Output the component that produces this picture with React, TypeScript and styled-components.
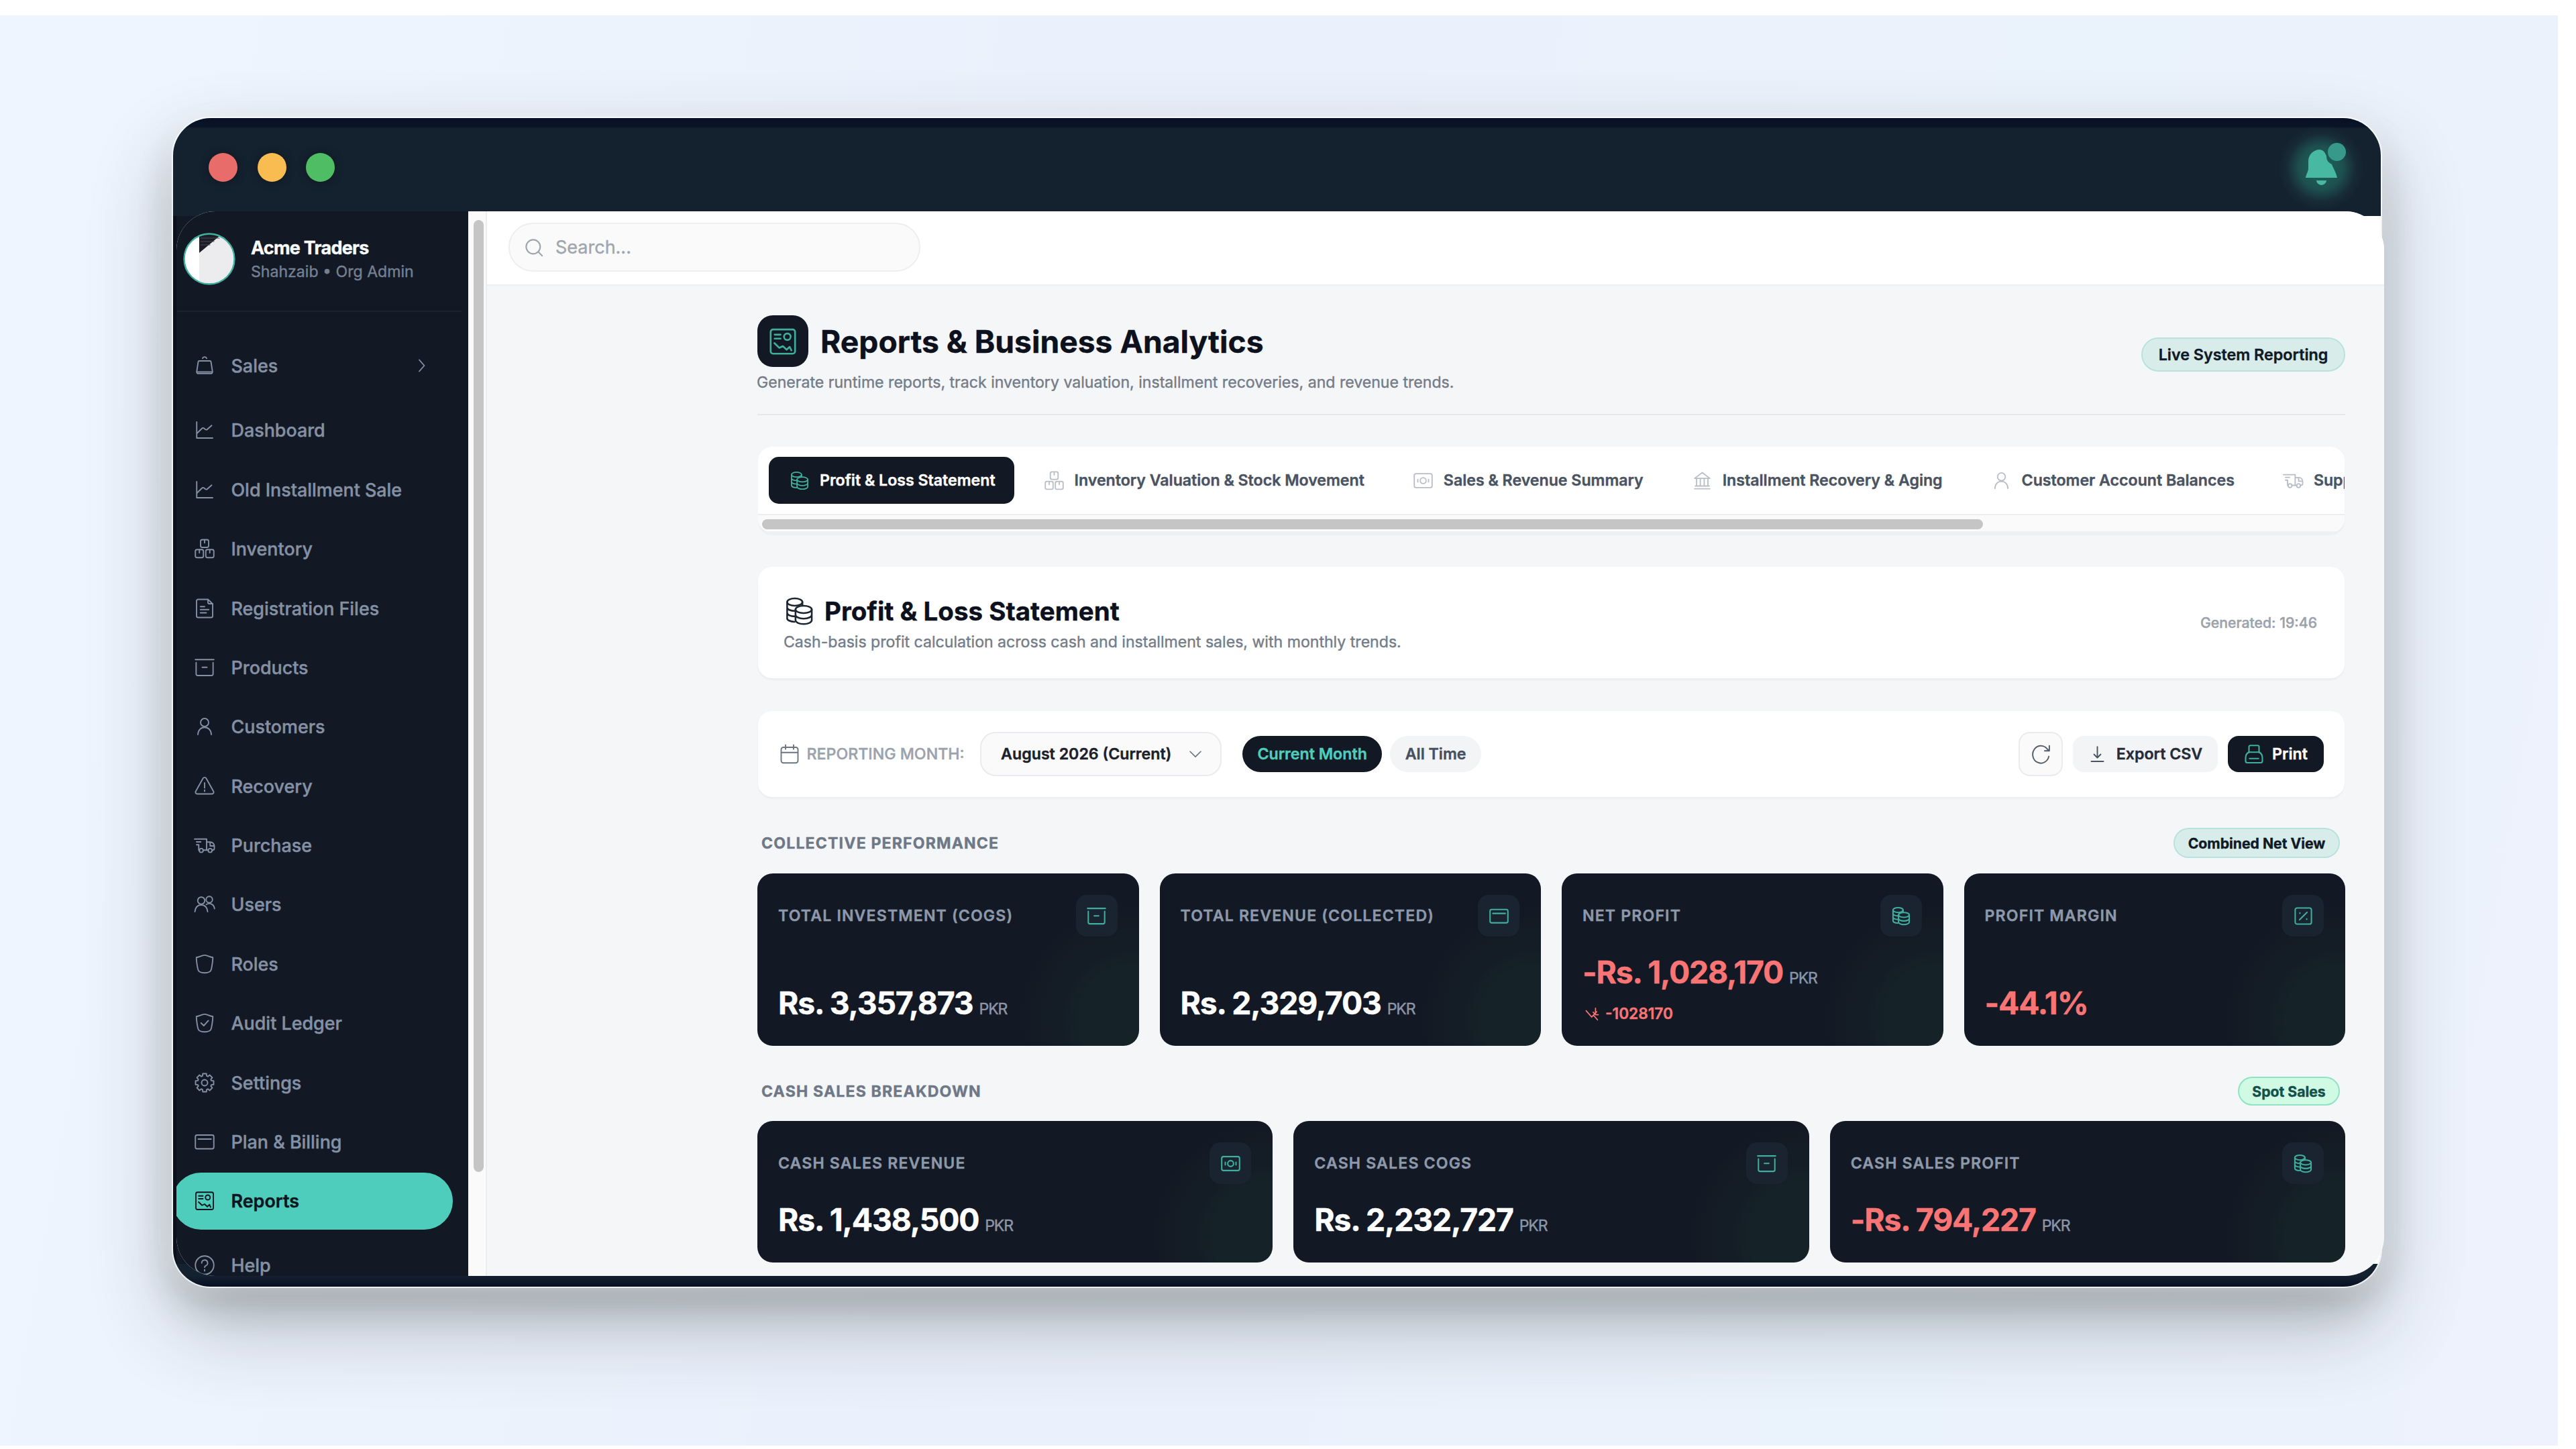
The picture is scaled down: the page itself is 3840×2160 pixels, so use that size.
import React from 'react'
import styled, { createGlobalStyle, css } from 'styled-components'

const NAVY = '#131924'
const TEAL = '#4ecdbc'
const ICON_TEAL = '#3fae9c'
const RED = '#f97575'

const GlobalStyle = createGlobalStyle`
  * {
    box-sizing: border-box;
  }

  body {
    margin: 0;
    background: #fff;
    font-family: Inter, 'Liberation Sans', sans-serif;
    -webkit-text-stroke: 0.4px;
    overflow: hidden;
  }
`

/* ---------- icons ---------- */

const gearPath = () => {
  const pts: string[] = []
  for (let i = 0; i < 8; i++) {
    const a = (i * Math.PI) / 4
    const at = (r: number, d: number) =>
      `${(12 + r * Math.sin(a + d)).toFixed(2)} ${(12 - r * Math.cos(a + d)).toFixed(2)}`
    pts.push(at(8.4, -0.3), at(11, -0.2), at(11, 0.2), at(8.4, 0.3))
  }
  return `M${pts.join('L')}Z`
}

const ICONS: Record<string, React.ReactNode> = {
  bag: (
    <>
      <path d='M9.6 3.4a2.5 2.3 0 0 1 4.8 0' />
      <path d='M5.6 6.4h12.8a1.2 1.2 0 0 1 1.2 1l1.8 11.8a2 2 0 0 1-2 2.3H4.6a2 2 0 0 1-2-2.3L4.4 7.4a1.2 1.2 0 0 1 1.2-1z' />
      <path d='M3 19.6h18' />
    </>
  ),
  chart: (
    <>
      <path d='M2.6 2.4v19.2h19' />
      <path d='M3 15.800l5.800-5.600c.9-.9 1.900-.9 2.800 0l1 .9c.9.800 1.900.800 2.800-.1L20.400 6.600' />
    </>
  ),
  boxes: (
    <>
      <rect x='7.2' y='1.2' width='9.6' height='9.2' rx='2' />
      <rect x='1' y='13' width='9.6' height='9.6' rx='2' />
      <rect x='13.4' y='13' width='9.6' height='9.6' rx='2' />
      <path d='M12 1.4v3.600M5.800 13.200v3.600M18.200 13.200v3.600' />
    </>
  ),
  file: (
    <>
      <path d='M16 1.2H4.2a1.8 1.8 0 0 0-1.800 1.800v18a1.800 1.800 0 0 0 1.800 1.800h15.600a1.800 1.800 0 0 0 1.800-1.800V6.600z' />
      <path d='M16 1.4v3.4a1.6 1.6 0 0 0 1.6 1.6h3.800M7 9.800h5M7 13.400h10M7 17.200h7' />
    </>
  ),
  archive: (
    <path d='M1 2.6h22M1.9 6.2v13.4a2 2 0 0 0 2 2h16.2a2 2 0 0 0 2-2V6.2M9.2 11.8h5.6' />
  ),
  user: (
    <>
      <circle cx='12' cy='7.2' r='4.8' />
      <path d='M4 21.6c.2-5.4 3.6-8.6 8-8.6s7.8 3.2 8 8.6' />
    </>
  ),
  warn: (
    <>
      <path d='M10.2 2.4a2.2 2.2 0 0 1 3.6 0l8.8 15.8a2 2 0 0 1-1.8 3H3.2a2 2 0 0 1-1.8-3z' />
      <path d='M12 8v6M12 16.6v1.4' />
    </>
  ),
  truck: (
    <>
      <path d='M0 4.6h14.4v13.2H10.4M2.4 8h5M2.4 11.4h2.6v6.4h1' />
      <path d='M14.4 8.2h4.4c2.8 0 4.8 2.2 4.8 5v2.6a2 2 0 0 1-2 2h-.6M14.4 17.8h1.8M18.6 8.4v4.4h5' />
      <circle cx='8' cy='18.2' r='2.3' />
      <circle cx='18.6' cy='18.2' r='2.3' />
    </>
  ),
  users: (
    <>
      <circle cx='8' cy='7.6' r='4.2' />
      <path d='M.4 20.8c.2-4.8 3.2-8 7.6-8s7.4 3.2 7.6 8' />
      <circle cx='17.6' cy='6.4' r='3.8' />
      <path d='M14 12.2c4.600-2.800 9.400.2 9.800 5' />
    </>
  ),
  shield: (
    <path d='M2.2 4.2C6 3.7 8.4 1.5 12 1.5s6 2.2 9.8 2.7c0 5-.8 9.3-1.8 14.1-.6 2.9-4 4.3-8 4.3s-7.4-1.4-8-4.3C3 13.5 2.2 9.2 2.2 4.2z' />
  ),
  shieldCheck: (
    <>
      <path d='M2.2 4.2C6 3.7 8.4 1.5 12 1.5s6 2.2 9.8 2.7c0 5-.8 9.3-1.8 14.1-.6 2.9-4 4.3-8 4.3s-7.4-1.4-8-4.3C3 13.5 2.2 9.2 2.2 4.2z' />
      <path d='M7.8 12l3.2 3.2 5.4-6' />
    </>
  ),
  gear: (
    <>
      <path d={gearPath()} />
      <circle cx='12' cy='12' r='3.6' />
    </>
  ),
  card: (
    <>
      <rect x='1' y='4' width='22' height='16.4' rx='2' />
      <path d='M4.4 8.8h15.4' />
    </>
  ),
  report: (
    <>
      <rect x='1.6' y='1.8' width='20.8' height='20.6' rx='2' />
      <path d='M5 6.2h5M5 9.6h5M4.8 13.4l4.2 4 3-1.4 3.2 3 2.6-2.4 1.4 3' />
      <circle cx='15.8' cy='8' r='2.8' />
    </>
  ),
  help: (
    <>
      <circle cx='12' cy='12' r='11' />
      <path d='M8.6 9.4a3.5 3.5 0 1 1 5 3.1c-1 .5-1.6 1-1.6 2.1M12 17.4v1.4' />
    </>
  ),
  coins: (
    <>
      <ellipse cx='8.6' cy='4.6' rx='6.2' ry='3' />
      <path d='M2.4 4.6v13.2c0 1.5 2.5 2.8 6 2.9M14.8 4.6v2.6M2.4 9c0 1.6 2.7 2.9 6.4 2.9M2.4 13.4c0 1.6 2.7 2.9 6.4 2.9' />
      <ellipse cx='15.8' cy='10.6' rx='6.6' ry='3' />
      <path d='M9.2 10.6v8.8c0 1.7 2.9 3.1 6.6 3.1s6.6-1.4 6.6-3.1v-8.8M9.2 15c0 1.7 2.9 3.1 6.6 3.1s6.6-1.4 6.6-3.1' />
    </>
  ),
  bill: (
    <>
      <rect x='1' y='3.4' width='22' height='17.2' rx='2.2' />
      <circle cx='12' cy='12' r='3.6' />
      <path d='M5.4 10.4v3.2M18.6 10.4v3.2' />
    </>
  ),
  bank: (
    <path d='M2.6 9.2L12 2l9.4 7.2zM5 9.4v9M9.6 9.4v9M14.4 9.4v9M19 9.4v9M3.4 18.6h17.2M2.6 22h18.8' />
  ),
  percent: (
    <>
      <rect x='2' y='2' width='20' height='20' rx='2.4' />
      <path d='M7.4 16.6l9.2-9.2M7.8 8v.6M16.2 15.6v.6' />
    </>
  ),
  printer: (
    <>
      <path d='M6 10V3.4A1.6 1.6 0 0 1 7.6 1.8h8.8A1.6 1.6 0 0 1 18 3.4V10' />
      <path d='M6 9.8h12c2.8 1.4 4 3.6 4 6.6v4a2 2 0 0 1-2 2H4a2 2 0 0 1-2-2v-4c0-3 1.2-5.2 4-6.6zM6.6 17.4h10.8' />
    </>
  ),
  download: <path d='M12 2v14M7.6 12l4.4 4.4 4.4-4.4M4 21.4h16' />,
  refresh: (
    <path d='M21 14.4A9.4 10 0 1 1 18.6 5.2L21.4 8M21.6 2.2V8h-5.4' />
  ),
  calendar: (
    <>
      <rect x='2' y='4' width='20' height='18.6' rx='2.6' />
      <path d='M2.2 10.2h19.6M7.2 1.2v5M16.8 1.2v5' />
    </>
  ),
  search: (
    <>
      <circle cx='11' cy='11' r='9' />
      <path d='M17.6 17.6l4.8 4.8' />
    </>
  ),
  right: <path d='M8 3.500l7.500 8.500-7.500 8.500' />,
  down: <path d='M2.5 7.5l9.5 9.5 9.5-9.5' />,
  trendDown: (
    <path d='M1.6 6.4l9.4 10.8 8.6-9M14 14l7 8M17.6 2v10.4M13.6 9l4.2 4.2h4.4' />
  ),
}

type IconProps = {
  name: string
  size?: number
  color?: string
  weight?: number
}

const Glyph = styled.svg`
  display: block;
  flex: none;
  overflow: visible;
  fill: none;
  stroke-linecap: round;
  stroke-linejoin: round;
`

const Icon: React.FC<IconProps> = ({
  name,
  size = 30,
  color = 'currentColor',
  weight = 1.5,
}) => (
  <Glyph
    width={size}
    height={size}
    viewBox='0 0 24 24'
    stroke={color}
    strokeWidth={weight}
  >
    {ICONS[name]}
  </Glyph>
)

/* ---------- stage and window ---------- */

const Page = styled.div`
  width: 3840px;
  height: 2160px;
  padding: 23px 27px 5px 0;
  background: #fff;
`

const Stage = styled.div`
  height: 2132px;
  overflow: hidden;
  padding: 153px 264px 0 258px;
  background: linear-gradient(100deg, #eef5fe 0%, #ebf1fc 40%, #eaf2fc 75%, #edf2fc 100%);
`

const Window = styled.div`
  height: 1742px;
  border-radius: 56px;
  background:
    linear-gradient(90deg, #0b111b 5px, ${NAVY} 5px, ${NAVY} 50%, #fff 50%) 0 146px / 100% 1562px,
    linear-gradient(#060f24 0, #0a1429 10px, #071126 12px, #14212f 16px, #14212f 1726px, #071024 1742px);
  background-repeat: no-repeat;
  box-shadow:
    0 0 0 2px rgba(255, 255, 255, 0.75),
    0 0 26px 4px rgba(255, 255, 255, 0.35),
    0 26px 54px rgba(40, 48, 44, 0.2),
    0 56px 120px rgba(40, 48, 46, 0.3);
`

const TitleBar = styled.header`
  height: 139px;
  display: flex;
  align-items: center;
  justify-content: space-between;
  padding: 8px 11px 0 53px;
`

const Lights = styled.div`
  display: flex;
  gap: 29.5px;
`

const Light = styled.span<{ color: string }>`
  width: 43px;
  height: 43px;
  border-radius: 50%;
  background: ${({ color }) => color};
  box-shadow: 0 0 12px rgba(16, 18, 22, 0.6);
`

const BellGlow = styled.div`
  display: grid;
  place-items: center;
  width: 156px;
  height: 130px;
  background: radial-gradient(circle closest-side, #1f6660 0, #1d504f 50%, rgba(28, 58, 66, 0.4) 78%, rgba(20, 33, 47, 0) 100%);
`

const Bell: React.FC = () => (
  <BellGlow>
    <Glyph width='76' height='76' viewBox='0 0 76 76'>
      <path
        d='M35 11c-9 1-15 7-16 16v12c0 5-4 10-4 14h47c-2-9-6-14-8-20-6-3-8-7-8-12-2-6-5-10-11-10z'
        fill='#47b9a2'
      />
      <path d='M31 57h15c-1 9-14 9-15 0z' fill='#47b9a2' />
      <circle cx='61.5' cy='14.5' r='13.5' fill='#36998a' />
    </Glyph>
  </BellGlow>
)

const Panel = styled.div`
  display: flex;
  width: 3291px;
  height: 1587px;
  margin-left: 5px;
  border-radius: 58px;
  overflow: hidden;
  background: #f4f6f8;
`

/* ---------- sidebar ---------- */

const Sidebar = styled.aside`
  width: 435px;
  flex: none;
  background: ${NAVY};
  overflow: hidden;
`

const Profile = styled.div`
  display: flex;
  align-items: center;
  gap: 23px;
  height: 150px;
  width: 425px;
  padding: 0 0 6px 10px;
  border-bottom: 2px solid #1b222e;
`

const OrgName = styled.div`
  color: #f8fafc;
  font-size: 26.9px;
  font-weight: 700;
  line-height: 37px;
  letter-spacing: -0.025em;
`

const OrgRole = styled.div`
  color: #758093;
  font-size: 23.1px;
  line-height: 34px;
`

const NavList = styled.nav`
  display: flex;
  flex-direction: column;
  gap: 3.9px;
  margin: 38px 0 0 -6px;
`

const NavRow = styled.a<{ $active?: boolean; $top?: boolean }>`
  display: flex;
  align-items: center;
  flex: none;
  gap: 24.5px;
  width: 418px;
  height: 84.5px;
  padding: 0 34px 0 33px;
  border-radius: 43px;
  color: #8491a5;
  font-size: 26.9px;
  font-weight: 500;

  ${({ $top }) =>
    $top &&
    css`
      margin-top: 7.7px;
    `}

  ${({ $active }) =>
    $active &&
    css`
      background: ${TEAL};
      color: #0d1520;
      font-weight: 600;
    `}
`

const NavLabel = styled.span`
  flex: 1;
`

const ScrollTrack = styled.div`
  width: 28px;
  flex: none;
  padding: 13px 0 0 7px;
  background: #fafafa;
  border-left: 1px solid #fff;
  border-right: 2px solid #ededef;
`

const ScrollThumb = styled.div`
  width: 15px;
  height: 1419px;
  border-radius: 8px;
  background: #c5c5c5;
`

const NAV = [
  { icon: 'bag', label: 'Sales', more: true },
  { icon: 'chart', label: 'Dashboard', top: true },
  { icon: 'chart', label: 'Old Installment Sale' },
  { icon: 'boxes', label: 'Inventory' },
  { icon: 'file', label: 'Registration Files' },
  { icon: 'archive', label: 'Products' },
  { icon: 'user', label: 'Customers' },
  { icon: 'warn', label: 'Recovery' },
  { icon: 'truck', label: 'Purchase' },
  { icon: 'users', label: 'Users' },
  { icon: 'shield', label: 'Roles' },
  { icon: 'shieldCheck', label: 'Audit Ledger' },
  { icon: 'gear', label: 'Settings' },
  { icon: 'card', label: 'Plan & Billing' },
  { icon: 'report', label: 'Reports', active: true },
  { icon: 'help', label: 'Help', top: true },
]

const Avatar: React.FC = () => (
  <Glyph width='78' height='78' viewBox='0 0 78 78'>
    <defs>
      <clipPath id='avatar'>
        <circle cx='39' cy='39' r='37' />
      </clipPath>
    </defs>
    <g clipPath='url(#avatar)'>
      <rect width='78' height='78' fill='#fff' />
      <rect x='24' width='54' height='78' fill='#ececee' />
      <path d='M24 0h36L24 30z' fill='#1d1d27' />
      <path d='M26 8h28M26 13h20M26 18h14' stroke='#4a4a56' strokeWidth='1.2' />
    </g>
    <circle cx='39' cy='39' r='37.5' stroke='#3fb09d' strokeWidth='2.4' />
  </Glyph>
)

/* ---------- main column ---------- */

const Main = styled.main`
  flex: 1;
  min-width: 0;
`

const TopBar = styled.div`
  display: flex;
  height: 111px;
  padding: 17px 0 0 32px;
  background: #fff;
  border-bottom: 2px solid #eceef0;
`

const SearchBox = styled.div`
  display: flex;
  align-items: center;
  gap: 18px;
  width: 614px;
  height: 73px;
  padding: 0 22px;
  border: 2px solid #eceef0;
  border-radius: 37px;
  background: #fafafa;
  color: #a0a6ae;
  font-size: 27px;
`

const Content = styled.div`
  padding: 44px 58px 0 403px;
`

const Between = styled.div`
  display: flex;
  align-items: center;
  justify-content: space-between;
`

const PageHead = styled(Between)`
  height: 149px;
  padding-bottom: 31px;
  border-bottom: 2px solid #e5e8eb;
`

const TitleRow = styled.div`
  display: flex;
  align-items: center;
  gap: 18px;
`

const TitleTile = styled.div`
  display: grid;
  place-items: center;
  width: 76px;
  height: 77px;
  border-radius: 23px;
  background: ${NAVY};
`

const Title = styled.h1`
  margin: 0;
  color: #0c111d;
  font-size: 46.2px;
  font-weight: 700;
  line-height: 56px;
`

const Note = styled.p<{ $gap: number }>`
  margin: ${({ $gap }) => $gap}px 0 0 -1px;
  color: #747c88;
  font-size: 23.1px;
  line-height: 32px;
`

const Badge = styled.span<{ $size?: 'lg' | 'sm' }>`
  display: inline-flex;
  align-items: center;
  justify-content: center;
  height: 45px;
  width: 248px;
  border: 2px solid #b8e3dc;
  border-radius: 26px;
  background: #d8edea;
  color: #121926;
  font-size: 21.2px;
  font-weight: 700;

  ${({ $size }) =>
    $size === 'lg' &&
    css`
      height: 51px;
      width: 304px;
      font-size: 23.3px;
      font-weight: 600;
    `}

  ${({ $size }) =>
    $size === 'sm' &&
    css`
      height: 43px;
      width: 152px;
      border-color: #8fe3c2;
      background: #d1fae5;
      color: #14504a;
    `}
`

const Card = styled.section`
  margin: 0 1px;
  border-radius: 21px;
  background: #fff;
  box-shadow: 0 3px 3px rgba(20, 30, 40, 0.035);
`

const TabsCard = styled(Card)`
  height: 128px;
  margin-top: 47px;
  overflow: hidden;
  box-shadow: 0 4px 2px rgba(20, 30, 40, 0.03);
`

const Tabs = styled.div`
  display: flex;
  gap: 13.5px;
  height: 100px;
  padding: 15px 0 0 16px;
`

const Tab = styled.div<{ $active?: boolean }>`
  display: flex;
  align-items: center;
  flex: none;
  gap: 16px;
  height: 70px;
  padding: 0 28.5px 0 31px;
  border-radius: 15px;
  color: #4a5361;
  font-size: 23.15px;
  font-weight: 600;
  white-space: nowrap;

  svg {
    color: #b9bec6;
  }

  ${({ $active }) =>
    $active &&
    css`
      background: ${NAVY};
      color: #fff;

      svg {
        color: ${ICON_TEAL};
      }
    `}
`

const TabsScroll = styled.div`
  height: 28px;
  padding: 6px 0 0 6px;
  border-top: 2px solid #eeeeef;
  border-bottom: 2px solid #f0f0f1;
  background: #fafafa;
`

const TabsThumb = styled.div`
  width: 1820px;
  height: 15px;
  border-radius: 8px;
  background: #c5c5c5;
`

const StatementCard = styled(Card)`
  display: flex;
  align-items: center;
  justify-content: space-between;
  height: 166px;
  margin-top: 51px;
  padding: 0 41px 0 39px;
`

const StatementTitle = styled.h2`
  display: flex;
  align-items: center;
  gap: 16px;
  margin: 0;
  color: #0c111d;
  font-size: 38.5px;
  font-weight: 700;
  line-height: 54px;
`

const Generated = styled.span`
  color: #9ba2ac;
  font-size: 21.2px;
  font-weight: 500;
`

const FilterCard = styled(Card)`
  display: flex;
  align-items: center;
  justify-content: space-between;
  height: 128px;
  margin-top: 49px;
  padding: 0 31px 0 32px;
`

const FilterGroup = styled.div`
  display: flex;
  align-items: center;
  font-size: 23.2px;
  font-weight: 600;
`

const FilterLabel = styled.span`
  margin: 0 23.5px 0 10.5px;
  color: #9ba2ac;
  font-weight: 500;
`

const Select = styled.div`
  display: flex;
  align-items: center;
  justify-content: space-between;
  width: 360px;
  height: 66px;
  margin-right: 31px;
  padding: 0 27px 0 29px;
  border: 2px solid #e9ebee;
  border-radius: 23px;
  background: #fafafa;
  color: #1a202c;
`

const Chip = styled.span<{ $active?: boolean }>`
  display: grid;
  place-items: center;
  width: ${({ $active }) => ($active ? 208 : 136)}px;
  height: 54px;
  margin-right: 12px;
  border-radius: 27px;
  background: ${({ $active }) => ($active ? NAVY : '#f3f4f6')};
  color: ${({ $active }) => ($active ? TEAL : '#465060')};
`

const Action = styled.button<{ $dark?: boolean }>`
  display: flex;
  align-items: center;
  justify-content: center;
  gap: ${({ $dark }) => ($dark ? 12 : 15)}px;
  width: ${({ $dark }) => ($dark ? 143 : 216)}px;
  height: 54px;
  margin-left: 15px;
  padding: 0;
  border: 0;
  border-radius: 16px;
  background: ${({ $dark }) => ($dark ? NAVY : '#f3f4f6')};
  color: ${({ $dark }) => ($dark ? '#fff' : '#252c39')};
  font: inherit;
`

const RefreshButton = styled.button`
  display: grid;
  place-items: center;
  width: 66px;
  height: 66px;
  padding: 0;
  border: 2px solid #e9ebee;
  border-radius: 17px;
  background: #fafafa;
`

const SectionHead = styled(Between)<{ $h: number }>`
  height: ${({ $h }) => $h}px;
  margin-top: 46px;
  padding: 0 8px 0 6px;
  color: #6f7886;
  font-size: 23.1px;
  font-weight: 700;
  letter-spacing: 0.05em;

  ${Badge} {
    letter-spacing: 0;
  }
`

const StatGrid = styled.div<{ $cols: number; $h: number }>`
  display: grid;
  grid-template-columns: repeat(${({ $cols }) => $cols}, 1fr);
  gap: 31px;
  height: ${({ $h }) => $h}px;
  margin-top: 23px;
`

const StatCard = styled.article`
  display: flex;
  flex-direction: column;
  justify-content: space-between;
  padding: 32px 32px 31px 31px;
  border-radius: 23px;
  background:
    radial-gradient(
      circle at calc(100% - 10px) calc(100% - 40px),
      #152329 0,
      #152228 80px,
      #141d26 105px,
      #131924 170px
    )
    ${NAVY};
`

const StatLabel = styled.span`
  color: #8d99ab;
  font-size: 23.1px;
  font-weight: 600;
  letter-spacing: 0.05em;
`

const StatTile = styled.div`
  display: grid;
  place-items: center;
  width: 62px;
  height: 62px;
  border-radius: 16px;
  background: #1a2430;
`

const StatValue = styled.div<{ $negative?: boolean }>`
  color: ${({ $negative }) => ($negative ? RED : '#fff')};
  font-size: 46.3px;
  font-weight: 700;
  line-height: 66px;
  letter-spacing: -1.157px;
`

const Unit = styled.span`
  margin-left: 9px;
  color: #8b97a8;
  font-size: 23.1px;
  font-weight: 400;
  line-height: 1;
`

const Trend = styled.div`
  display: flex;
  align-items: center;
  gap: 9px;
  margin-top: 12px;
  padding-left: 4px;
  color: ${RED};
  font-size: 22.7px;
  font-weight: 600;
  line-height: 34px;
`

const TABS = [
  { icon: 'coins', label: 'Profit & Loss Statement' },
  { icon: 'boxes', label: 'Inventory Valuation & Stock Movement' },
  { icon: 'bill', label: 'Sales & Revenue Summary' },
  { icon: 'bank', label: 'Installment Recovery & Aging' },
  { icon: 'user', label: 'Customer Account Balances' },
  { icon: 'truck', label: 'Supplier' },
]

type Stat = {
  label: string
  icon: string
  value: string
  unit?: boolean
  trend?: string
}

const COLLECTIVE: Stat[] = [
  { label: 'TOTAL INVESTMENT (COGS)', icon: 'archive', value: 'Rs. 3,357,873', unit: true },
  { label: 'TOTAL REVENUE (COLLECTED)', icon: 'card', value: 'Rs. 2,329,703', unit: true },
  { label: 'NET PROFIT', icon: 'coins', value: '-Rs. 1,028,170', unit: true, trend: '-1028170' },
  { label: 'PROFIT MARGIN', icon: 'percent', value: '-44.1%' },
]

const CASH: Stat[] = [
  { label: 'CASH SALES REVENUE', icon: 'bill', value: 'Rs. 1,438,500', unit: true },
  { label: 'CASH SALES COGS', icon: 'archive', value: 'Rs. 2,232,727', unit: true },
  { label: 'CASH SALES PROFIT', icon: 'coins', value: '-Rs. 794,227', unit: true },
]

const StatItem: React.FC<Stat> = ({ label, icon, value, unit, trend }) => (
  <StatCard>
    <Between>
      <StatLabel>{label}</StatLabel>
      <StatTile>
        <Icon name={icon} size={29} color={ICON_TEAL} weight={1.7} />
      </StatTile>
    </Between>
    <div>
      <StatValue $negative={value.startsWith('-')}>
        {value}
        {unit && <Unit>PKR</Unit>}
      </StatValue>
      {trend && (
        <Trend>
          <Icon name='trendDown' size={21} weight={2} />
          {trend}
        </Trend>
      )}
    </div>
  </StatCard>
)

const App: React.FC = () => (
  <Page>
    <GlobalStyle />
    <Stage>
      <Window>
        <TitleBar>
          <Lights>
            <Light color='#e86c6a' />
            <Light color='#f8bc50' />
            <Light color='#4fbd63' />
          </Lights>
          <Bell />
        </TitleBar>
        <Panel>
          <Sidebar>
            <Profile>
              <Avatar />
              <div>
                <OrgName>Acme Traders</OrgName>
                <OrgRole>Shahzaib • Org Admin</OrgRole>
              </div>
            </Profile>
            <NavList>
              {NAV.map(({ icon, label, active, top, more }) => (
                <NavRow key={label} $active={active} $top={top}>
                  <Icon name={icon} />
                  <NavLabel>{label}</NavLabel>
                  {more && <Icon name='right' size={24} weight={1.8} />}
                </NavRow>
              ))}
            </NavList>
          </Sidebar>
          <ScrollTrack>
            <ScrollThumb />
          </ScrollTrack>
          <Main>
            <TopBar>
              <SearchBox>
                <Icon name='search' size={28} weight={1.8} />
                Search...
              </SearchBox>
            </TopBar>
            <Content>
              <PageHead>
                <div>
                  <TitleRow>
                    <TitleTile>
                      <Icon name='report' size={42} color={ICON_TEAL} />
                    </TitleTile>
                    <Title>Reports & Business Analytics</Title>
                  </TitleRow>
                  <Note $gap={7}>
                    Generate runtime reports, track inventory valuation,
                    installment recoveries, and revenue trends.
                  </Note>
                </div>
                <Badge $size='lg'>Live System Reporting</Badge>
              </PageHead>
              <TabsCard>
                <Tabs>
                  {TABS.map(({ icon, label }, i) => (
                    <Tab key={label} $active={i === 0}>
                      <Icon name={icon} size={29} />
                      {label}
                    </Tab>
                  ))}
                </Tabs>
                <TabsScroll>
                  <TabsThumb />
                </TabsScroll>
              </TabsCard>
              <StatementCard>
                <div>
                  <StatementTitle>
                    <Icon name='coins' size={44} color='#1c2430' weight={1.4} />
                    Profit & Loss Statement
                  </StatementTitle>
                  <Note $gap={3}>
                    Cash-basis profit calculation across cash and installment
                    sales, with monthly trends.
                  </Note>
                </div>
                <Generated>Generated: 19:46</Generated>
              </StatementCard>
              <FilterCard>
                <FilterGroup>
                  <Icon name='calendar' size={30} color='#6b7480' />
                  <FilterLabel>REPORTING MONTH:</FilterLabel>
                  <Select>
                    August 2026 (Current)
                    <Icon name='down' size={20} color='#6b7480' weight={2} />
                  </Select>
                  <Chip $active>Current Month</Chip>
                  <Chip>All Time</Chip>
                </FilterGroup>
                <FilterGroup>
                  <RefreshButton>
                    <Icon name='refresh' size={31} color='#555e6b' weight={1.5} />
                  </RefreshButton>
                  <Action>
                    <Icon name='download' size={27} color='#4b5461' weight={1.7} />
                    Export CSV
                  </Action>
                  <Action $dark>
                    <Icon name='printer' size={30} color={ICON_TEAL} weight={1.7} />
                    Print
                  </Action>
                </FilterGroup>
              </FilterCard>
              <SectionHead $h={45}>
                COLLECTIVE PERFORMANCE
                <Badge>Combined Net View</Badge>
              </SectionHead>
              <StatGrid $cols={4} $h={257}>
                {COLLECTIVE.map((s) => (
                  <StatItem key={s.label} {...s} />
                ))}
              </StatGrid>
              <SectionHead $h={43}>
                CASH SALES BREAKDOWN
                <Badge $size='sm'>Spot Sales</Badge>
              </SectionHead>
              <StatGrid $cols={3} $h={211}>
                {CASH.map((s) => (
                  <StatItem key={s.label} {...s} />
                ))}
              </StatGrid>
            </Content>
          </Main>
        </Panel>
      </Window>
    </Stage>
  </Page>
)

export default App
